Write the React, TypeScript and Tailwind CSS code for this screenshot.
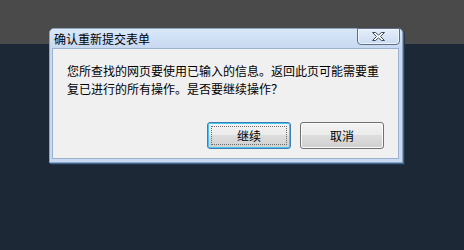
import React from "react";

const font = { fontFamily: '"Noto Sans CJK SC", "Noto Sans", sans-serif' };

function CloseGlyph() {
  return (
    <svg width="15" height="11" viewBox="0 0 15 11">
      <path
        d="M1.5 1.5h3l3 2.6 3-2.6h3l-4 4 4 4h-3l-3-2.6-3 2.6h-3l4-4z"
        fill="#ffffff"
        stroke="#3f4b5b"
        strokeWidth="1"
        strokeLinejoin="round"
      />
    </svg>
  );
}

function WinButton({ label, isDefault }: { label: string; isDefault?: boolean }) {
  return (
    <button
      type="button"
      className={`relative w-[84px] h-[27px] rounded-[3px] border text-[12px] text-black bg-[linear-gradient(#f3f3f3_0%,#ebebeb_48%,#dddddd_50%,#cfcfcf_100%)] ${
        isDefault
          ? "border-[#3c7fb1] shadow-[inset_0_0_0_1px_#48c4f4]"
          : "border-[#707070] shadow-[inset_0_0_0_1px_#fbfbfb]"
      }`}
      style={font}
    >
      {isDefault && (
        <span className="absolute inset-[3px] border border-dotted border-[#6b6b6b] pointer-events-none" />
      )}
      <span className="relative leading-none">{label}</span>
    </button>
  );
}

export default function App() {
  return (
    <div className="relative w-[464px] h-[250px] bg-[#1c2836] overflow-hidden">
      <div className="h-[44px] bg-[#4a4a4a]" />

      {/* dialog */}
      <div className="absolute left-[49px] top-[28px] w-[354px] rounded-t-[5px] border border-[#8fa4bf] bg-[#c8daf1] shadow-[1px_1px_0_#3f6590,2px_2px_0_#23354a]">
        <div className="relative h-[19px] pl-[4px] flex items-center bg-[linear-gradient(#d9e7f8,#c7d9f1)] rounded-t-[4px]">
          <span className="text-[12px] text-black leading-none" style={font}>
            确认重新提交表单
          </span>
          <div className="absolute right-[2px] -top-px w-[43px] h-[17px] rounded-b-[4px] border border-[#5d6e85] bg-[linear-gradient(#e4eefa,#cbdcf1)] flex items-center justify-center shadow-[inset_0_0_0_1px_#eef4fc]">
            <CloseGlyph />
          </div>
        </div>
        <div className="pl-[2px] pr-[3px] pb-[3px]">
          <div className="border border-[#9bb1cd] bg-[#f0f0f0] pt-[13px] pb-[9px] px-[14px]">
            <p className="text-[12px] leading-[18px] text-black" style={font}>
              您所查找的网页要使用已输入的信息。返回此页可能需要重复已进行的所有操作。是否要继续操作？
            </p>
            <div className="mt-[24px] flex justify-end gap-[9px]">
              <WinButton label="继续" isDefault />
              <WinButton label="取消" />
            </div>
          </div>
        </div>
      </div>
    </div>
  );
}
